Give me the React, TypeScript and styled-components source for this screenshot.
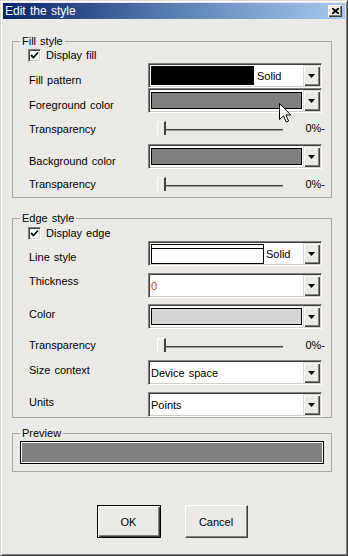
import React from "react";
import styled, { createGlobalStyle } from "styled-components";

const GlobalStyle = createGlobalStyle`
  html, body {
    margin: 0;
    padding: 0;
    background: #eceae7;
  }
  body {
    font-family: "Liberation Sans", Arial, sans-serif;
    font-size: 11px;
    color: #000;
  }
`;

const Window = styled.div`
  position: relative;
  width: 348px;
  height: 556px;
  box-sizing: border-box;
  background: #eceae7;
  border: 1px solid;
  border-color: #dcdad5 #404040 #404040 #dcdad5;
  box-shadow: inset 1px 1px 0 #fff, inset -1px -1px 0 #808080;
  padding: 2px;
  display: flex;
  flex-direction: column;
`;

const TitleBar = styled.div`
  height: 16px;
  display: flex;
  align-items: center;
  justify-content: space-between;
  padding: 0 3px 0 2px;
  background: linear-gradient(to right, #0a246a, #5a7fb4 50%, #a6caf0);
  color: #fff;
  font-size: 12px;
  word-spacing: 1px;
`;

const CloseButton = styled.div`
  width: 14px;
  height: 12px;
  box-sizing: border-box;
  display: flex;
  align-items: center;
  justify-content: center;
  background: #eceae7;
  box-shadow: inset 1px 1px 0 #fff, inset -1px -1px 0 #404040, inset -2px -2px 0 #808080;
`;

const Body = styled.div`
  flex: 1;
  padding: 22px 13px 0 9px;
  display: flex;
  flex-direction: column;
`;

const Group = styled.div<{ $mt?: number }>`
  position: relative;
  border: 1px solid #a9a8a4;
  margin-top: ${(p) => p.$mt ?? 0}px;
  padding: 0 9px 1px 16px;
`;

const Legend = styled.span`
  position: absolute;
  top: -7px;
  left: 7px;
  padding: 0 2px;
  line-height: 13px;
  background: #eceae7;
  word-spacing: 1px;
`;

const Rows = styled.div<{ $pt: number }>`
  padding-top: ${(p) => p.$pt}px;
  display: flex;
  flex-direction: column;
`;

const CheckRow = styled.div`
  height: 14px;
  display: flex;
  align-items: center;
  gap: 5px;
  margin-left: -1px;
  word-spacing: 1px;
`;

const CheckBox = styled.div`
  width: 13px;
  height: 13px;
  box-sizing: border-box;
  background: #fff;
  border: 1px solid;
  border-color: #808080 #fff #fff #808080;
  box-shadow: inset 1px 1px 0 #404040, inset -1px -1px 0 #d4d0c8;
  display: flex;
  align-items: center;
  justify-content: center;
`;

const Row = styled.div<{ $h: number }>`
  height: ${(p) => p.$h}px;
  display: flex;
  align-items: flex-start;
`;

const Label = styled.div<{ $top: number }>`
  width: 119px;
  margin-top: ${(p) => p.$top}px;
  line-height: 13px;
  word-spacing: 1px;
`;

const Control = styled.div<{ $top: number }>`
  width: 174px;
  margin-top: ${(p) => p.$top}px;
`;

const Combo = styled.div`
  height: 25px;
  box-sizing: border-box;
  display: flex;
  background: #fff;
  border: 1px solid;
  border-color: #808080 #fff #fff #808080;
  box-shadow: inset 1px 1px 0 #404040, inset -1px -1px 0 #d4d0c8;
  padding: 1px;
`;

const Field = styled.div`
  flex: 1;
  display: flex;
  align-items: center;
  min-width: 0;
  word-spacing: 1px;
`;

const DropButton = styled.div`
  width: 17px;
  box-sizing: border-box;
  background: #eceae7;
  display: flex;
  align-items: center;
  justify-content: center;
  box-shadow: inset 1px 1px 0 #dcdad5, inset 2px 2px 0 #fff, inset -1px -1px 0 #404040,
    inset -2px -2px 0 #808080;
`;

const PatternSwatch = styled.div`
  width: 103px;
  align-self: stretch;
  margin: 1px 3px 1px 1px;
  background: #000;
`;

const ColorSwatch = styled.div<{ $color: string }>`
  flex: 1;
  align-self: stretch;
  margin: 2px 1px 2px 1px;
  border: 1px solid #000;
  background: ${(p) => p.$color};
`;

const LineSwatch = styled.div`
  width: 113px;
  align-self: stretch;
  box-sizing: border-box;
  margin: 1px 2px 0 1px;
  border: 1px solid #000;
  background: linear-gradient(to bottom, #fff 0 3px, #000 3px 4px, #fff 4px);
`;

const ValueText = styled.span<{ $color?: string }>`
  padding-left: 1px;
  color: ${(p) => p.$color ?? "#000"};
`;

const Slider = styled.div`
  height: 14px;
  display: flex;
  align-items: flex-start;
  padding-left: 9px;
`;

const Thumb = styled.div`
  width: 9px;
  height: 14px;
  box-sizing: border-box;
  border-left: 1px solid #fff;
  border-top: 1px solid #fff;
  border-right: 2px solid #404040;
`;

const Track = styled.div`
  width: 117px;
  height: 1px;
  margin-top: 8px;
  background: #404040;
  border-bottom: 1px solid #9a9a9a;
`;

const Percent = styled.span`
  margin-left: auto;
  margin-right: -3px;
  margin-top: 1px;
  line-height: 13px;
`;

const PreviewBox = styled.div`
  height: 23px;
  margin: 7px -2px 6px -9px;
  box-sizing: border-box;
  border: 1px solid #000;
  box-shadow: inset 0 0 0 1px #fff;
  background: #808080;
`;

const ButtonBar = styled.div`
  margin-top: 33px;
  display: flex;
  justify-content: center;
  gap: 24px;
`;

const Button = styled.button<{ $default?: boolean }>`
  width: ${(p) => (p.$default ? 64 : 63)}px;
  height: 33px;
  box-sizing: border-box;
  padding: 0;
  font-family: "Liberation Sans", Arial, sans-serif;
  font-size: 11px;
  color: #000;
  background: #eceae7;
  border: 1px solid;
  border-color: ${(p) => (p.$default ? "#000" : "#fff #404040 #404040 #fff")};
  box-shadow: ${(p) =>
    p.$default
      ? "inset 1px 1px 0 #fff, inset -1px -1px 0 #404040, inset -2px -2px 0 #808080"
      : "inset -1px -1px 0 #808080"};
`;

const Cursor = styled.svg`
  position: absolute;
  left: 278px;
  top: 102px;
`;

const Arrow = () => (
  <DropButton>
    <svg width="7" height="4" viewBox="0 0 7 4">
      <polygon points="0,0 7,0 3.5,4" fill="#000" />
    </svg>
  </DropButton>
);

const Check = () => (
  <CheckBox>
    <svg width="9" height="9" viewBox="0 0 9 9">
      <path d="M1 4 L3.5 6.5 L8 1.5" stroke="#000" strokeWidth="1.8" fill="none" />
    </svg>
  </CheckBox>
);

function Transparency({ h, top, label }: { h: number; top: number; label: number }) {
  return (
    <Row $h={h}>
      <Label $top={label}>Transparency</Label>
      <Control $top={top}>
        <Slider>
          <Thumb />
          <Track />
          <Percent>0%-</Percent>
        </Slider>
      </Control>
    </Row>
  );
}

export default function App() {
  return (
    <Window>
      <GlobalStyle />
      <TitleBar>
        <span>Edit the style</span>
        <CloseButton>
          <svg width="7" height="6" viewBox="0 0 7 6">
            <path d="M0 0 L7 6 M7 0 L0 6" stroke="#000" strokeWidth="1.8" />
          </svg>
        </CloseButton>
      </TitleBar>
      <Body>
        <Group>
          <Legend>Fill style</Legend>
          <Rows $pt={6}>
            <CheckRow>
              <Check />
              Display fill
            </CheckRow>
            <Row $h={26}>
              <Label $top={12}>Fill pattern</Label>
              <Control $top={1}>
                <Combo>
                  <Field>
                    <PatternSwatch />
                    Solid
                  </Field>
                  <Arrow />
                </Combo>
              </Control>
            </Row>
            <Row $h={26}>
              <Label $top={11}>Foreground color</Label>
              <Control $top={0}>
                <Combo>
                  <Field>
                    <ColorSwatch $color="#808080" />
                  </Field>
                  <Arrow />
                </Combo>
              </Control>
            </Row>
            <Transparency h={28} top={7} label={9} />
            <Row $h={28}>
              <Label $top={13}>Background color</Label>
              <Control $top={2}>
                <Combo>
                  <Field>
                    <ColorSwatch $color="#808080" />
                  </Field>
                  <Arrow />
                </Combo>
              </Control>
            </Row>
            <Transparency h={26} top={7} label={8} />
          </Rows>
        </Group>

        <Group $mt={20}>
          <Legend>Edge style</Legend>
          <Rows $pt={7}>
            <CheckRow>
              <Check />
              Display edge
            </CheckRow>
            <Row $h={28}>
              <Label $top={11}>Line style</Label>
              <Control $top={1}>
                <Combo>
                  <Field>
                    <LineSwatch />
                    Solid
                  </Field>
                  <Arrow />
                </Combo>
              </Control>
            </Row>
            <Row $h={34}>
              <Label $top={7}>Thickness</Label>
              <Control $top={5}>
                <Combo>
                  <Field>
                    <ValueText $color="#b85000">0</ValueText>
                  </Field>
                  <Arrow />
                </Combo>
              </Control>
            </Row>
            <Row $h={30}>
              <Label $top={6}>Color</Label>
              <Control $top={2}>
                <Combo>
                  <Field>
                    <ColorSwatch $color="#d6d6d6" />
                  </Field>
                  <Arrow />
                </Combo>
              </Control>
            </Row>
            <Transparency h={26} top={6} label={7} />
            <Row $h={32}>
              <Label $top={6}>Size context</Label>
              <Control $top={2}>
                <Combo>
                  <Field>
                    <ValueText>Device space</ValueText>
                  </Field>
                  <Arrow />
                </Combo>
              </Control>
            </Row>
            <Row $h={26}>
              <Label $top={6}>Units</Label>
              <Control $top={2}>
                <Combo>
                  <Field>
                    <ValueText>Points</ValueText>
                  </Field>
                  <Arrow />
                </Combo>
              </Control>
            </Row>
          </Rows>
        </Group>

        <Group $mt={15}>
          <Legend>Preview</Legend>
          <PreviewBox />
        </Group>

        <ButtonBar>
          <Button $default>OK</Button>
          <Button>Cancel</Button>
        </ButtonBar>
      </Body>
      <Cursor width="13" height="20" viewBox="0 0 13 20">
        <path
          d="M0.5 0.5 L0.5 16.5 L4.5 12.8 L7.3 19 L9.6 18 L6.9 12 L11.8 12 Z"
          fill="#fff"
          stroke="#000"
          strokeWidth="1"
          strokeLinejoin="miter"
        />
      </Cursor>
    </Window>
  );
}
